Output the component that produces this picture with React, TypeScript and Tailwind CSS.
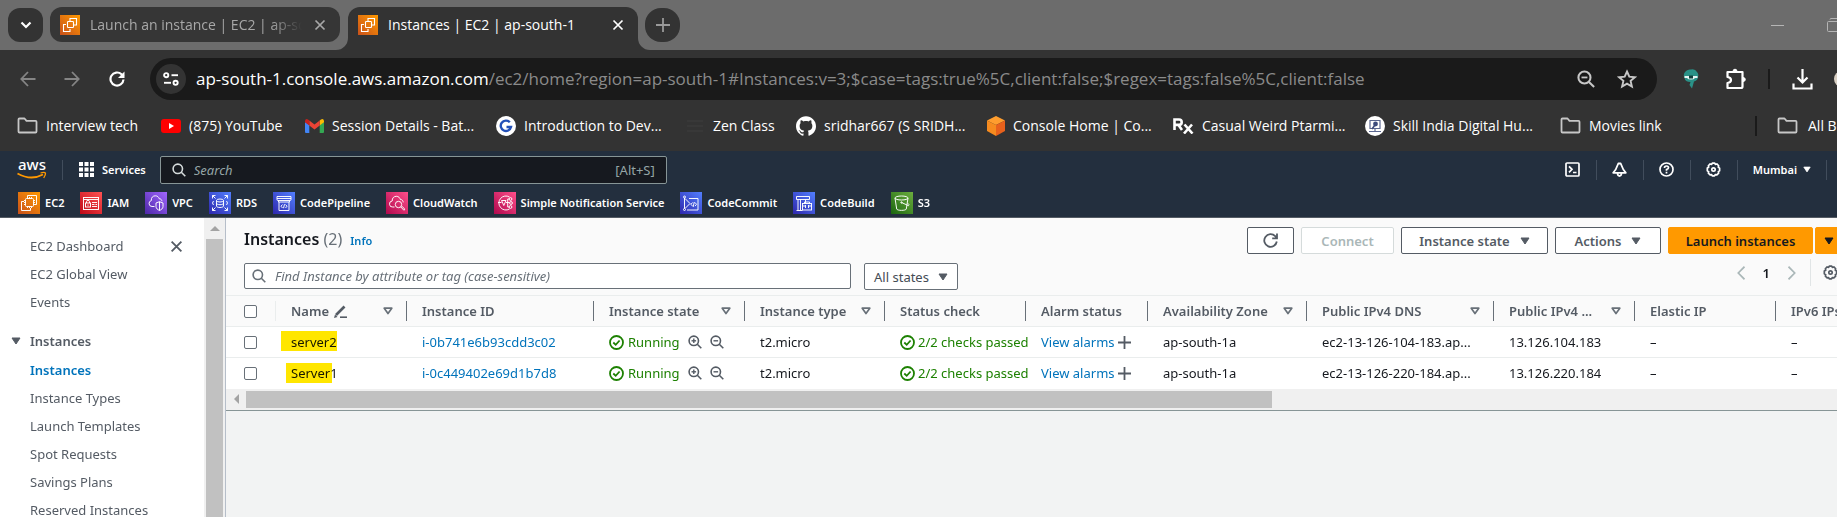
import React, { type ReactNode } from "react";
import { SiGithub } from "react-icons/si";

const AWS = "font-['Noto_Sans','Open_Sans',sans-serif]";

type P = { className?: string };

/* ---------- browser icons ---------- */

const Favicon = () => (
  <svg className="h-5 w-5 shrink-0" viewBox="0 0 20 20" aria-hidden="true">
    <defs>
      <linearGradient id="fav" x1="0" y1="1" x2="1" y2="0">
        <stop offset="0" stopColor="#c8511b" />
        <stop offset="1" stopColor="#ff9900" />
      </linearGradient>
    </defs>
    <rect width="20" height="20" fill="url(#fav)" />
    <g fill="none" stroke="#fff" strokeWidth="1.1">
      <path d="M10 6V3.500h6.500V10H14" />
      <rect x="7.500" y="6.500" width="6" height="6" rx=".8" />
      <path d="M6 9.500H3.500v7H10V14" />
    </g>
  </svg>
);

const CloseX = ({ className = "" }: P) => (
  <svg className={className} viewBox="0 0 12 12" fill="none" stroke="currentColor" strokeWidth="1.7" aria-hidden="true">
    <path d="M1.500 1.500l9 9M10.500 1.500l-9 9" />
  </svg>
);

const Folder = () => (
  <svg className="h-[17px] w-[21px] shrink-0" viewBox="0 0 21 17" fill="none" stroke="#c7c7c7" strokeWidth="1.8" strokeLinejoin="round" aria-hidden="true">
    <path d="M1.500 14.500v-12q0-1 1-1h5l2 2.300h9q1 0 1 1v9.700q0 1-1 1h-16q-1 0-1-1z" />
  </svg>
);

/* ---------- AWS icons ---------- */

const GRADS: Record<string, [string, string]> = {
  orange: ["#c8511b", "#ff9900"],
  red: ["#bd0816", "#ff5252"],
  purple: ["#4d27a8", "#a166ff"],
  blue: ["#2e27ad", "#527fff"],
  pink: ["#b0084d", "#ff4f8b"],
  green: ["#1b660f", "#6cae3e"],
};

function Tile({ tone, children }: { tone: string; children: ReactNode }) {
  const id = React.useId();
  const [a, b] = GRADS[tone];
  return (
    <svg className="h-[22px] w-[22px] shrink-0" viewBox="0 0 22 22" aria-hidden="true">
      <defs>
        <linearGradient id={id} x1="0" y1="1" x2="1" y2="0">
          <stop offset="0" stopColor={a} />
          <stop offset="1" stopColor={b} />
        </linearGradient>
      </defs>
      <rect width="22" height="22" fill={`url(#${id})`} />
      <g fill="none" stroke="#fff" strokeWidth=".95">{children}</g>
    </svg>
  );
}

const SERVICES: { name: string; tone: string; art: ReactNode }[] = [
  {
    name: "EC2",
    tone: "orange",
    art: (
      <>
        <path d="M9.500 5V3.500h9v9H17" />
        <rect x="7.500" y="6.500" width="8" height="8" rx="1" />
        <path d="M9.500 5v1.500M11.500 5v1.500M13.500 5v1.500M9.500 14.500V16M11.500 14.500V16M13.500 14.500V16M6 8.500h1.500M6 10.500h1.500M6 12.500h1.500M15.500 8.500H17M15.500 10.500H17M15.500 12.500H17" />
        <path d="M6 9.500H3.500v9h9V16" />
      </>
    ),
  },
  {
    name: "IAM",
    tone: "red",
    art: (
      <>
        <rect x="3.500" y="5.500" width="15" height="12" />
        <path d="M3.500 7.500h15M12 10.500h5M12 12.500h2.500M15.500 12.500h1.500M12 14.500h5" />
        <rect x="5.500" y="11" width="5" height="4" />
        <path d="M6.500 11V9.800a1.500 1.500 0 0 1 3 0V11M8 12.500v1.200" />
      </>
    ),
  },
  {
    name: "VPC",
    tone: "purple",
    art: (
      <>
        <path d="M9.500 14.500H7a3 3 0 0 1-.7-5.900C6 5.500 8 3.800 10.300 3.800c2.200 0 3.400 1.300 4 3 1.700-.2 2.500 1.200 2.600 2.400" />
        <path d="M11 11l3.500-1.300L18 11v3.500c0 2-1.700 3.200-3.500 4-1.800-.8-3.500-2-3.500-4zM14.500 9.700v8.800" />
      </>
    ),
  },
  {
    name: "RDS",
    tone: "blue",
    art: (
      <>
        <path d="M3.500 6.500v-3h3M3.500 3.500L6.500 6.500M18.500 6.500v-3h-3M18.500 3.500L15.500 6.500M3.500 15.500v3h3M3.500 18.500L6.500 15.500M18.500 15.500v3h-3M18.500 18.500L15.500 15.500" />
        <ellipse cx="11" cy="8.500" rx="3.500" ry="1.500" />
        <path d="M7.500 8.500v5.500c0 2 7 2 7 0V8.500M7.500 11.200c0 2 7 2 7 0" />
        <path d="M4.500 9l-1 2 1 2M17.500 9l1 2-1 2" />
      </>
    ),
  },
  {
    name: "CodePipeline",
    tone: "blue",
    art: (
      <>
        <path d="M4 4.500h14v3q0 1-1 1H5q-1 0-1-1zM4 6.500h14M5.500 8.500v1.500h11V8.500" />
        <path d="M6 10v8.500h10V10M9.500 12.500L8 14.200l1.500 1.800M12.500 12.500l1.500 1.700-1.500 1.800M11.500 12.200l-1 4" />
      </>
    ),
  },
  {
    name: "CloudWatch",
    tone: "pink",
    art: (
      <>
        <path d="M8.500 15H6.800a3 3 0 0 1-.6-6C6 6 8 4.300 10.300 4.300c2.200 0 3.500 1.400 4 3.100 1.800 0 2.800 1.300 2.900 3" />
        <circle cx="12.500" cy="12.500" r="3.200" />
        <path d="M14.800 14.900l3 3.300M16 14.200l2.600 2.800q.3 1-.8 1.200" />
      </>
    ),
  },
  {
    name: "Simple Notification Service",
    tone: "pink",
    art: (
      <>
        <path d="M15.500 5A7 7 0 1 0 15.500 17M4 10.500h3.500M7.500 8.500h4.500l-2.200 5zM12 10.500h3.500M13.700 7v8M13.700 7h1.500M13.700 15h1.500" />
        <circle cx="16.500" cy="7" r="1.400" />
        <circle cx="17" cy="11" r="1.400" />
        <circle cx="16.500" cy="15" r="1.400" />
      </>
    ),
  },
  {
    name: "CodeCommit",
    tone: "blue",
    art: (
      <>
        <path d="M4.500 6v10.500M5 6.500l5 5-5 5M9 6.500h9v11.500H7" />
        <circle cx="4.500" cy="5" r="1" />
        <circle cx="4.500" cy="17.500" r="1" />
        <path d="M12.500 10.500L11 12.300l1.500 1.800M15 10.500l1.500 1.800-1.500 1.800M14.300 10l-1.200 5" />
      </>
    ),
  },
  {
    name: "CodeBuild",
    tone: "blue",
    art: (
      <>
        <path d="M3.500 4.500h13v3h-13zM5 7.500v11M7.500 7.500v11M3.500 18.500h6M12.500 7.500V11" />
        <rect x="9.500" y="11.500" width="9" height="6.500" />
        <path d="M11.500 11.500V10h5v1.500M9.500 14h2.500M16 14h2.500M12.500 13v3M15.500 13v3" />
      </>
    ),
  },
  {
    name: "S3",
    tone: "green",
    art: (
      <>
        <ellipse cx="10.500" cy="6" rx="6.500" ry="2" />
        <path d="M4 6l1.700 11c.3 1.800 9.300 1.800 9.600 0L17 6M10.500 10.500l7 3.200q1.300-1-.8-2.500" />
        <circle cx="10.500" cy="10.500" r=".7" />
      </>
    ),
  },
];

const Magnifier = ({ className = "", sign }: P & { sign?: "plus" | "minus" }) => (
  <svg className={className} viewBox="0 0 14 14" fill="none" stroke="currentColor" strokeWidth="1.6" aria-hidden="true">
    <circle cx="5.800" cy="5.800" r="4.700" />
    <path d="M9.300 9.300l4 4" />
    {sign && <path d="M3.500 5.800h4.600" strokeWidth="1.400" />}
    {sign === "plus" && <path d="M5.800 3.500v4.600" strokeWidth="1.400" />}
  </svg>
);

const Gear = ({ className = "" }: P) => (
  <svg className={className} viewBox="0 0 16 16" fill="none" stroke="currentColor" strokeWidth="1.800" strokeLinejoin="round" aria-hidden="true">
    <path d="M6.700 1.200h2.600l.7 1.300 1.600-.4 1.900 1.900-.4 1.600 1.400.9v2.900l-1.400.9.4 1.600-1.900 1.900-1.600-.4-.9 1.400H6.700L6 13.400l-1.600.4-1.900-1.900.4-1.600-1.500-.9V6.500l1.500-.9-.4-1.600 1.900-1.900 1.600.4z" />
    <circle cx="8" cy="8" r="1.800" />
  </svg>
);

const Caret = ({ className = "" }: P) => (
  <svg className={className} viewBox="0 0 10 8" fill="currentColor" stroke="currentColor" strokeLinejoin="round" aria-hidden="true">
    <path d="M1 1h8L5 7z" />
  </svg>
);

const SortMark = () => (
  <svg className="h-2 w-[10px] shrink-0 text-[#687078]" viewBox="0 0 10 8" fill="none" stroke="currentColor" strokeWidth="1.700" strokeLinejoin="round" aria-hidden="true">
    <path d="M1.200 1.200h7.600L5 6.500z" />
  </svg>
);

const Check = () => (
  <svg className="h-[15px] w-[15px] shrink-0" viewBox="0 0 15 15" fill="none" stroke="#1d8102" strokeWidth="1.800" aria-hidden="true">
    <circle cx="7.500" cy="7.500" r="6.500" />
    <path d="M4.300 7.500l2.400 2.300L10.600 5.500" />
  </svg>
);

/* ---------- browser chrome ---------- */

function TabStrip() {
  return (
    <div className="flex h-[50px] shrink-0 items-start bg-[#6c6c6c] pl-2 text-[14px] leading-5">
      <button aria-label="Search tabs" className="mt-2 flex h-[34px] w-[35px] shrink-0 items-center justify-center rounded-xl bg-[#333] text-white">
        <svg className="h-2 w-3" viewBox="0 0 12 8" fill="none" stroke="currentColor" strokeWidth="2.200" aria-hidden="true">
          <path d="M1.500 1.500L6 6l4.500-4.500" />
        </svg>
      </button>
      <div className="ml-[7px] mt-[7px] flex h-[35px] w-[290px] shrink-0 items-center rounded-xl bg-[#363636] pl-[10px] text-[#a8a8a8]">
        <Favicon />
        <a href="#launch" className="ml-[10px] w-[212px] overflow-hidden whitespace-nowrap [mask-image:linear-gradient(to_right,black_85%,transparent)]">
          Launch an instance | EC2 | ap-south-1
        </a>
        <button aria-label="Close tab Launch an instance" className="ml-[12px]"><CloseX className="h-3 w-3" /></button>
      </div>
      <div className="relative ml-2 mt-[7px] flex h-[43px] w-[290px] shrink-0 items-center rounded-t-xl bg-[#333] pb-2 pl-[10px] text-white">
        <svg className="absolute -left-3 bottom-0 h-3 w-3" viewBox="0 0 12 12" fill="#333" aria-hidden="true"><path d="M12 0v12H0A12 12 0 0 0 12 0z" /></svg>
        <svg className="absolute -right-3 bottom-0 h-3 w-3" viewBox="0 0 12 12" fill="#333" aria-hidden="true"><path d="M0 0v12h12A12 12 0 0 1 0 0z" /></svg>
        <Favicon />
        <a href="#instances" className="ml-[10px] w-[212px] whitespace-nowrap">Instances | EC2 | ap-south-1</a>
        <button aria-label="Close tab Instances" className="ml-[12px]"><CloseX className="h-3 w-3" /></button>
      </div>
      <button aria-label="New tab" className="ml-[7px] mt-2 flex h-[34px] w-[35px] shrink-0 items-center justify-center rounded-2xl bg-[#333] text-[#9a9a9a]">
        <svg className="h-[14px] w-[14px]" viewBox="0 0 14 14" stroke="currentColor" strokeWidth="1.800" aria-hidden="true"><path d="M7 0v14M0 7h14" /></svg>
      </button>
      <div className="ml-auto mt-[17px] flex shrink-0 items-center">
        <button aria-label="Minimize" className="flex h-4 w-[13px] items-center"><span className="h-px w-full bg-[#b5b5b5]" /></button>
        <button aria-label="Restore" className="ml-[43px] h-[14px] w-[10px] overflow-hidden">
          <svg className="h-[14px] w-4 max-w-none" viewBox="0 0 16 14" fill="none" stroke="#b5b5b5" aria-hidden="true">
            <rect x=".5" y="3.500" width="12" height="10" rx="1" />
            <path d="M3 1.500q0-1 1-1h10q1.500 0 1.500 1.500v8" />
          </svg>
        </button>
      </div>
    </div>
  );
}

function Toolbar() {
  return (
    <div className="flex h-[58px] shrink-0 items-center bg-[#333] pl-5 text-white">
      <button aria-label="Back" className="shrink-0 text-[#858585]">
        <svg className="h-4 w-4" viewBox="0 0 16 16" fill="none" stroke="currentColor" strokeWidth="1.800" aria-hidden="true"><path d="M15.500 8H1.500M8 1L1.300 8 8 15" /></svg>
      </button>
      <button aria-label="Forward" className="ml-[28px] shrink-0 text-[#858585]">
        <svg className="h-4 w-4" viewBox="0 0 16 16" fill="none" stroke="currentColor" strokeWidth="1.800" aria-hidden="true"><path d="M.5 8h14M8 1l6.700 7L8 15" /></svg>
      </button>
      <button aria-label="Reload" className="ml-[29px] shrink-0">
        <svg className="h-4 w-4" viewBox="0 0 16 16" fill="none" stroke="currentColor" strokeWidth="2.200" aria-hidden="true"><path d="M14.500 8.500a6.500 6.500 0 1 1-2-5.200l2 2.200" /><path d="M15.500 .5v6.500H9z" fill="currentColor" stroke="none" /></svg>
      </button>
      <div className="ml-[25px] flex h-[42px] min-w-0 flex-1 items-center rounded-full bg-[#1a1a1a] pl-[6px] pr-5">
        <button aria-label="Site information" className="flex h-[30px] w-[30px] shrink-0 items-center justify-center rounded-full bg-[#333]">
          <svg className="h-[14px] w-4" viewBox="0 0 16 14" fill="none" stroke="#fff" strokeWidth="1.900" aria-hidden="true">
            <circle cx="3.200" cy="3.200" r="2.100" /><path d="M8.500 3.200H15" />
            <circle cx="12.600" cy="10.800" r="2.100" /><path d="M1 10.800h7" />
          </svg>
        </button>
        <div role="textbox" aria-label="Address" className="ml-[10px] min-w-0 flex-1 overflow-hidden whitespace-nowrap text-[17px] leading-6 text-[#8a8a8a]">
          <span className="text-white">ap-south-1.console.aws.amazon.com</span>/ec2/home?region=ap-south-1#Instances:v=3;$case=tags:true%5C,client:false;$regex=tags:false%5C,client:false
        </div>
        <button aria-label="Zoom" className="shrink-0 text-[#c7c7c7]"><Magnifier sign="minus" className="h-[18px] w-[18px]" /></button>
        <button aria-label="Bookmark this page" className="ml-[22px] shrink-0">
          <svg className="h-5 w-5" viewBox="0 0 20 20" fill="none" stroke="#c7c7c7" strokeWidth="1.900" aria-hidden="true"><path d="M10 2.500l2.300 5.200 5.600.5-4.300 3.700 1.300 5.600L10 14.600l-4.900 2.900 1.300-5.600L2.100 8.200l5.600-.5z" /></svg>
        </button>
      </div>
      <div className="ml-[26px] flex shrink-0 items-center">
        <button aria-label="Extension">
          <svg className="h-5 w-4" viewBox="0 0 16 20" aria-hidden="true">
            <path d="M3 2q2-2 5-1.500Q12-.5 14 3q2 2 1 5 0 3-4 4.500L9 19.500 6.500 16l1-3Q2 13 1.500 9-.5 5 3 2z" fill="#2a9187" />
            <path d="M1.500 7h13v2H12q-1 1.500-4 1.500T4 9H1.500z" fill="#e6f5f4" />
            <path d="M6 6.500h4v3H6z" fill="#123f3b" />
          </svg>
        </button>
        <button aria-label="Extensions" className="ml-[26px]">
          <svg className="h-[22px] w-[22px]" viewBox="0 0 22 22" fill="none" stroke="#fff" strokeWidth="2.200" strokeLinejoin="round" aria-hidden="true">
            <path d="M2.500 4h15v14.500q0 1.500-1.500 1.500H2.500v-5q3.500-.5 3.500-3t-3.500-3z" />
            <path d="M8 3.500a2 2.300 0 0 1 4 0zM18 9.500a2.300 2 0 0 1 0 4z" fill="#fff" strokeWidth="1" />
          </svg>
        </button>
        <span className="ml-[21px] h-5 w-[2px] bg-[#1a1a1a]" />
        <button aria-label="Downloads" className="ml-[22px]">
          <svg className="h-[21px] w-[21px]" viewBox="0 0 21 21" fill="none" stroke="#fff" strokeWidth="2.200" aria-hidden="true"><path d="M10.500 0v13M5.500 8.500l5 5 5-5M1.500 14.500v5h18v-5" /></svg>
        </button>
        <span className="ml-[21px] h-4 w-[3px] overflow-hidden"><span className="block h-4 w-4 rounded-full bg-[#d9d0c4]" /></span>
      </div>
    </div>
  );
}

const BOOKMARKS: { label: string; icon: ReactNode; width: string }[] = [
  { label: "Interview tech", icon: <Folder />, width: "w-[144px]" },
  {
    label: "(875) YouTube",
    icon: <svg className="h-[14px] w-5" viewBox="0 0 20 14" aria-hidden="true"><rect width="20" height="14" rx="3" fill="#f00" /><path d="M8 4l5 3-5 3z" fill="#fff" /></svg>,
    width: "w-[144px]",
  },
  {
    label: "Session Details - Bat...",
    icon: <svg className="h-[14px] w-[19px]" viewBox="0 0 19 14" aria-hidden="true">
      <path d="M0 3v10q0 1 1 1h3.300V6z" fill="#4285f4" /><path d="M19 3v10q0 1-1 1h-3.300V6z" fill="#34a853" />
      <path d="M14.700 1.500V6.500L19 3.300V2Q18.500-.8 16 .5z" fill="#fbbc04" /><path d="M4.300 6.500v-5L9.500 5.400l5.200-3.900v5L9.500 10.400z" fill="#ea4335" />
      <path d="M0 2v1.300l4.300 3.200v-5L3 .5Q.5-.8 0 2z" fill="#c5221f" />
    </svg>,
    width: "w-[191px]",
  },
  {
    label: "Introduction to Dev...",
    icon: <svg className="h-5 w-5" viewBox="0 0 20 20" aria-hidden="true"><circle cx="10" cy="10" r="10" fill="#fff" /><path d="M13.800 6.300A5.200 5.200 0 1 0 15 11H10.500" fill="none" stroke="#2350b8" strokeWidth="2.400" /></svg>,
    width: "w-[189px]",
  },
  {
    label: "Zen Class",
    icon: <svg className="h-4 w-5" viewBox="0 0 20 16" stroke="#383838" strokeWidth="2" aria-hidden="true"><path d="M2 3h16M2 8h16M2 13h16" /></svg>,
    width: "w-[111px]",
  },
  { label: "sridhar667 (S SRIDH...", icon: <SiGithub className="h-5 w-5" />, width: "w-[191px]" },
  {
    label: "Console Home | Co...",
    icon: <svg className="h-5 w-[18px]" viewBox="0 0 18 20" aria-hidden="true"><path d="M9 0l9 4.500L9 9 0 4.500z" fill="#ff9d2e" /><path d="M0 4.500L9 9v11l-9-5z" fill="#f68b1f" /><path d="M18 4.500L9 9v11l9-5z" fill="#e8611c" /></svg>,
    width: "w-[186px]",
  },
  {
    label: "Casual Weird Ptarmi...",
    icon: <svg className="h-4 w-[21px]" viewBox="0 0 21 16" fill="none" stroke="#fff" strokeWidth="2.600" aria-hidden="true"><path d="M1.500 12V1.500H6a2.700 2.700 0 0 1 0 5.400H2M5.500 7l3.500 5M11.500 6.500l8 9M19 6.500l-8 9" /></svg>,
    width: "w-[192px]",
  },
  {
    label: "Skill India Digital Hu...",
    icon: <svg className="h-5 w-5" viewBox="0 0 20 20" aria-hidden="true"><circle cx="10" cy="10" r="10" fill="#fff" /><path d="M5 4.500h10v8H5zM4 15.500h12M10 12v3" fill="none" stroke="#5b6790" strokeWidth="1.200" /><circle cx="10.500" cy="8" r="2.400" fill="#3d4b7c" /><path d="M7 13l3-4" stroke="#3d4b7c" strokeWidth="1.500" /></svg>,
    width: "w-[195px]",
  },
  { label: "Movies link", icon: <Folder />, width: "w-[110px]" },
];

function BookmarkBar() {
  return (
    <nav aria-label="Bookmarks" className="flex h-[43px] shrink-0 items-center bg-[#333] pb-2 pl-[17px] text-[14px] leading-5 text-white">
      {BOOKMARKS.map((b) => (
        <a key={b.label} href="#bookmark" className={`flex shrink-0 items-center gap-2 whitespace-nowrap ${b.width}`}>
          {b.icon}
          {b.label}
        </a>
      ))}
      <span className="ml-auto h-5 w-[2px] shrink-0 bg-[#1a1a1a]" />
      <a href="#all" className="ml-5 flex w-[60px] shrink-0 items-center gap-[10px] overflow-hidden whitespace-nowrap">
        <Folder />
        All Bookmarks
      </a>
    </nav>
  );
}

/* ---------- AWS header ---------- */

const Sep = () => <span className="h-5 w-px shrink-0 bg-[#414d5c]" />;

function AwsHeader() {
  return (
    <header className="shrink-0 border-b border-[#545b64] bg-[#232f3e] text-white">
      <div className="flex h-[37px] items-center pl-[17px] text-[11px] font-semibold leading-4">
        <a href="#home" aria-label="AWS home" className="mr-[15px] shrink-0">
          <svg className="h-5 w-[30px] overflow-visible" viewBox="0 0 30 20" aria-hidden="true">
            <text x="1" y="10" fill="#fff" fontFamily="Noto Sans, sans-serif" fontSize="15" fontWeight="500">aws</text>
            <path d="M.5 13.500Q14 21 26 14.500" fill="none" stroke="#f90" strokeWidth="1.800" />
            <path d="M23.500 13q4-1.300 5 .2.300 1.500-1.800 4.800" fill="none" stroke="#f90" strokeWidth="1.300" />
          </svg>
        </a>
        <Sep />
        <button className="ml-4 flex shrink-0 items-center gap-2">
          <svg className="h-[15px] w-[15px]" viewBox="0 0 15 15" fill="#fff" aria-hidden="true">
            {[0, 5.5, 11].flatMap((y) => [0, 5.5, 11].map((x) => <rect key={`${x}-${y}`} x={x} y={y} width="4" height="4" />))}
          </svg>
          Services
        </button>
        <label className="ml-[14px] flex h-7 w-[507px] shrink-0 items-center rounded-xs border border-[#879596] bg-[#16191f] px-[11px] text-[13px] font-normal">
          <Magnifier className="h-[14px] w-[14px] text-[#d5dbdb]" />
          <input aria-label="Search" placeholder="Search" className="ml-2 min-w-0 flex-1 bg-transparent italic outline-none placeholder:text-[#95a5a6]" />
          <span className="text-[#95a5a6]">[Alt+S]</span>
        </label>
        <div className="ml-auto flex shrink-0 items-center gap-[15px] pr-[10px]">
          <button aria-label="CloudShell" className="w-4">
            <svg className="h-[15px] w-[15px]" viewBox="0 0 15 15" fill="none" stroke="#fff" strokeWidth="1.700" aria-hidden="true"><rect x="1" y="1" width="13" height="13" rx="1" /><path d="M4 4.300l3 3-3 3M8 10.500h3.500" /></svg>
          </button>
          <Sep />
          <button aria-label="Notifications" className="w-4">
            <svg className="h-[15px] w-[15px]" viewBox="0 0 15 15" fill="none" stroke="#fff" strokeWidth="1.800" strokeLinejoin="round" aria-hidden="true"><path d="M1.200 10.800h12.600L11.300 7.500 8.700 1.500H6.300L3.700 7.500zM5.500 11.500q.3 2.500 2 2.500t2-2.500" /></svg>
          </button>
          <Sep />
          <button aria-label="Help" className="w-4">
            <svg className="h-[15px] w-[15px]" viewBox="0 0 15 15" fill="none" stroke="#fff" strokeWidth="1.700" aria-hidden="true"><circle cx="7.500" cy="7.500" r="6.500" /><path d="M5.500 6q0-2 2-2t2 1.700q0 1-2 1.800v1.200M7.500 9.800v1.700" /></svg>
          </button>
          <Sep />
          <button aria-label="Settings" className="w-4"><Gear className="h-[15px] w-[15px]" /></button>
          <Sep />
          <button className="flex items-center gap-[6px] font-semibold">Mumbai <Caret className="h-[7px] w-2" /></button>
          <Sep />
        </div>
      </div>
      <nav aria-label="Favorites" className="flex h-[29px] items-center gap-4 pl-[18px] text-[11px] font-semibold leading-4">
        {SERVICES.map((s) => (
          <a key={s.name} href="#service" className="flex shrink-0 items-center gap-[5px]">
            <Tile tone={s.tone}>{s.art}</Tile>
            {s.name}
          </a>
        ))}
      </nav>
    </header>
  );
}

/* ---------- sidebar ---------- */

const NAV_TOP = ["EC2 Dashboard", "EC2 Global View", "Events"];
const NAV_INSTANCES = ["Instances", "Instance Types", "Launch Templates", "Spot Requests", "Savings Plans", "Reserved Instances"];

function Sidebar() {
  return (
    <aside className="flex w-[226px] shrink-0 overflow-hidden border-r border-[#b6bec9] bg-white">
      <nav aria-label="EC2" className="relative min-w-0 flex-1 pl-[30px] pt-[14px] text-[13px] leading-7 text-[#545b64]">
        <button aria-label="Close navigation" className="absolute left-[170px] top-[22px]">
          <CloseX className="h-[13px] w-[13px]" />
        </button>
        <ul>
          {NAV_TOP.map((n) => (
            <li key={n} className="h-7"><a href="#nav">{n}</a></li>
          ))}
        </ul>
        <button className="-ml-[19px] mt-[11px] flex h-7 items-center gap-[9px] font-semibold">
          <Caret className="h-2 w-[10px]" />
          Instances
        </button>
        <ul className="mt-px">
          {NAV_INSTANCES.map((n) => (
            <li key={n} className={n === "Instances" ? "h-7 font-semibold text-[#0073bb]" : "h-7"}><a href="#nav">{n}</a></li>
          ))}
        </ul>
      </nav>
      <div className="flex w-[21px] shrink-0 flex-col items-center bg-[#f0f0f0]" aria-hidden="true">
        <svg className="my-2 h-[5px] w-[10px] shrink-0" viewBox="0 0 10 5" fill="#a3a3a3"><path d="M0 5h10L5 0z" /></svg>
        <div className="w-[17px] flex-1 bg-[#c1c1c1]" />
      </div>
    </aside>
  );
}

/* ---------- instances ---------- */

const BTN = "flex h-[27px] shrink-0 items-center justify-center gap-[10px] rounded-xs border text-[13px] font-semibold leading-5";

const COLUMNS: { label: string; width: string; sort?: boolean; edit?: boolean }[] = [
  { label: "Name", width: "w-[131px]", sort: true, edit: true },
  { label: "Instance ID", width: "w-[187px]" },
  { label: "Instance state", width: "w-[151px]", sort: true },
  { label: "Instance type", width: "w-[140px]", sort: true },
  { label: "Status check", width: "w-[141px]" },
  { label: "Alarm status", width: "w-[122px]" },
  { label: "Availability Zone", width: "w-[159px]", sort: true },
  { label: "Public IPv4 DNS", width: "w-[187px]", sort: true },
  { label: "Public IPv4 ...", width: "w-[141px]", sort: true },
  { label: "Elastic IP", width: "w-[141px]" },
  { label: "IPv6 IPs", width: "w-[141px]" },
];

const ROWS = [
  { name: "server2", mark: "-left-[10px] -top-px w-14", id: "i-0b741e6b93cdd3c02", dns: "ec2-13-126-104-183.ap...", ip: "13.126.104.183" },
  { name: "Server1", mark: "-left-[5px] top-0 w-[46px]", id: "i-0c449402e69d1b7d8", dns: "ec2-13-126-220-184.ap...", ip: "13.126.220.184" },
];

function InstancesTable() {
  return (
    <div className="overflow-hidden">
      <table className="w-[1690px] table-fixed border-collapse text-left text-[13px] leading-5 text-[#16191f]">
        <thead className="bg-[#fafafa] text-[#545b64]">
          <tr className="h-[31px] border-y border-[#eaeded]">
            <th className="w-[49px] pl-[18px] align-middle">
              <input type="checkbox" aria-label="Select all" className="block h-[13px] w-[13px] appearance-none rounded-xs border border-[#687078] bg-white" />
            </th>
            {COLUMNS.map((c, i) => (
              <th key={c.label} className={`${c.width} whitespace-nowrap p-0 font-semibold`}>
                <div className={`flex h-5 items-center border-l pl-[15px] pr-[13px] ${i === 0 ? "border-[#eaeded]" : "border-[#687078]"}`}>
                  {c.label}
                  {c.edit && (
                    <svg className="ml-[5px] h-[13px] w-[13px]" viewBox="0 0 13 13" fill="none" stroke="#545b64" aria-hidden="true">
                      <path d="M2 10L9.500 2.500l1-1" strokeWidth="2.600" /><path d="M0 13l1-3.500L3.500 12z" fill="#545b64" stroke="none" /><path d="M6 12.200h7" strokeWidth="1.600" />
                    </svg>
                  )}
                  {c.sort && <span className="ml-auto"><SortMark /></span>}
                </div>
              </th>
            ))}
          </tr>
        </thead>
        <tbody className="bg-white">
          {ROWS.map((r) => (
            <tr key={r.name} className="h-[31px] whitespace-nowrap border-b border-[#eaeded] last:border-b-0 [&>td]:p-0 [&>td]:pl-4">
              <td className="!pl-[18px]">
                <input type="checkbox" aria-label={`Select ${r.name}`} className="block h-[13px] w-[13px] appearance-none rounded-xs border border-[#687078] bg-white" />
              </td>
              <td>
                <span className="relative inline-block">
                  {r.name}
                  <span className={`absolute h-5 bg-[#ffe600] mix-blend-multiply ${r.mark}`} aria-hidden="true" />
                </span>
              </td>
              <td><a href="#instance" className="text-[#0073bb]">{r.id}</a></td>
              <td>
                <div className="flex items-center text-[#1d8102]">
                  <Check />
                  <span className="ml-1">Running</span>
                  <button aria-label="Filter in" className="ml-2 text-[#545b64]"><Magnifier sign="plus" className="h-[14px] w-[14px]" /></button>
                  <button aria-label="Filter out" className="ml-2 text-[#545b64]"><Magnifier sign="minus" className="h-[14px] w-[14px]" /></button>
                </div>
              </td>
              <td>t2.micro</td>
              <td><div className="flex items-center gap-[3px] text-[#1d8102]"><Check />2/2 checks passed</div></td>
              <td>
                <div className="flex items-center gap-[3px]">
                  <a href="#alarms" className="text-[#0073bb]">View alarms</a>
                  <button aria-label="Add alarm"><svg className="h-[13px] w-[13px]" viewBox="0 0 13 13" stroke="#545b64" strokeWidth="1.800" aria-hidden="true"><path d="M6.500 0v13M0 6.500h13" /></svg></button>
                </div>
              </td>
              <td>ap-south-1a</td>
              <td>{r.dns}</td>
              <td>{r.ip}</td>
              <td>–</td>
              <td>–</td>
            </tr>
          ))}
        </tbody>
      </table>
      <div className="flex h-[21px] items-center bg-[#f0f0f0] pl-2" aria-hidden="true">
        <svg className="h-[10px] w-[5px]" viewBox="0 0 5 10" fill="#a3a3a3"><path d="M5 0v10L0 5z" /></svg>
        <div className="ml-[7px] h-[17px] w-[64%] bg-[#c1c1c1]" />
      </div>
    </div>
  );
}

function Instances() {
  return (
    <main className="min-w-0 flex-1 bg-[#f2f3f3]">
      <section className="overflow-hidden border-b border-[#879596] bg-[#fafafa]">
        <div className="flex h-[77px] w-[calc(100%+6px)] flex-col pl-[18px] pt-[9px]">
          <div className="flex h-[27px] items-start">
            <div className="flex items-baseline gap-2">
              <h1 className="text-[16px] font-semibold leading-6 text-[#16191f]">
                Instances <span className="font-normal text-[#687078]">(2)</span>
              </h1>
              <a href="#info" className="text-[11px] font-semibold leading-4 text-[#0073bb]">Info</a>
            </div>
            <div className="ml-auto flex gap-[7px]">
              <button aria-label="Refresh" className={`${BTN} w-[47px] border-[#545b64] bg-white text-[#545b64]`}>
                <svg className="h-[15px] w-[15px]" viewBox="0 0 15 15" fill="none" stroke="currentColor" strokeWidth="1.800" aria-hidden="true"><path d="M13.800 8.500a6.300 6.300 0 1 1-1.600-5.300l1.600 1.800M14 .5V5.300H9.200" /></svg>
              </button>
              <button disabled className={`${BTN} w-[93px] border-[#d5dbdb] bg-white text-[#aab7b8]`}>Connect</button>
              <button className={`${BTN} w-[147px] border-[#545b64] bg-white text-[#545b64]`}>Instance state <Caret className="h-2 w-[10px]" /></button>
              <button className={`${BTN} w-[106px] border-[#545b64] bg-white text-[#545b64]`}>Actions <Caret className="h-2 w-[10px]" /></button>
              <div className="flex gap-[2px]">
                <button className={`${BTN} w-[145px] border-[#f90] bg-[#f90] text-[#16191f]`}>Launch instances</button>
                <button aria-label="More launch options" className={`${BTN} w-[28px] border-[#f90] bg-[#f90] text-[#16191f]`}><Caret className="h-2 w-[10px]" /></button>
              </div>
            </div>
          </div>
          <div className="mt-[9px] flex h-[27px] items-start text-[13px] leading-5">
            <label className="flex h-[26px] w-[607px] shrink-0 items-center rounded-xs border border-[#687078] bg-white pl-[7px]">
              <Magnifier className="h-[14px] w-[14px] text-[#687078]" />
              <input aria-label="Find Instance" placeholder="Find Instance by attribute or tag (case-sensitive)" className="ml-[9px] min-w-0 flex-1 bg-transparent italic outline-none placeholder:text-[#687078]" />
            </label>
            <button className="ml-[13px] flex h-[27px] w-[94px] shrink-0 items-center justify-center gap-[9px] rounded-xs border border-[#687078] bg-white text-[#444c55]">
              All states <Caret className="h-2 w-[10px] text-[#545b64]" />
            </button>
            <div className="-mt-1 ml-auto flex h-[27px] items-center">
              <button aria-label="Previous page"><svg className="h-[14px] w-2" viewBox="0 0 8 14" fill="none" stroke="#aab7b8" strokeWidth="1.700" aria-hidden="true"><path d="M7.500.7L1.300 7l6.200 6.300" /></svg></button>
              <button className="mx-[18px] font-semibold text-[#16191f]">1</button>
              <button aria-label="Next page"><svg className="h-[14px] w-2" viewBox="0 0 8 14" fill="none" stroke="#aab7b8" strokeWidth="1.700" aria-hidden="true"><path d="M.5.7L6.700 7 .5 13.300" /></svg></button>
              <span className="ml-[14px] h-[27px] w-px bg-[#e1e5e6]" />
              <button aria-label="Preferences" className="ml-3 mr-[5px] text-[#545b64]"><Gear className="h-[15px] w-[15px]" /></button>
            </div>
          </div>
        </div>
        <InstancesTable />
      </section>
    </main>
  );
}

export default function App() {
  return (
    <div className="flex h-screen flex-col overflow-hidden font-['Open_Sans','Noto_Sans',sans-serif]">
      <TabStrip />
      <Toolbar />
      <BookmarkBar />
      <div className={`flex min-h-0 flex-1 flex-col ${AWS}`}>
        <AwsHeader />
        <div className="flex min-h-0 flex-1">
          <Sidebar />
          <Instances />
        </div>
      </div>
    </div>
  );
}
